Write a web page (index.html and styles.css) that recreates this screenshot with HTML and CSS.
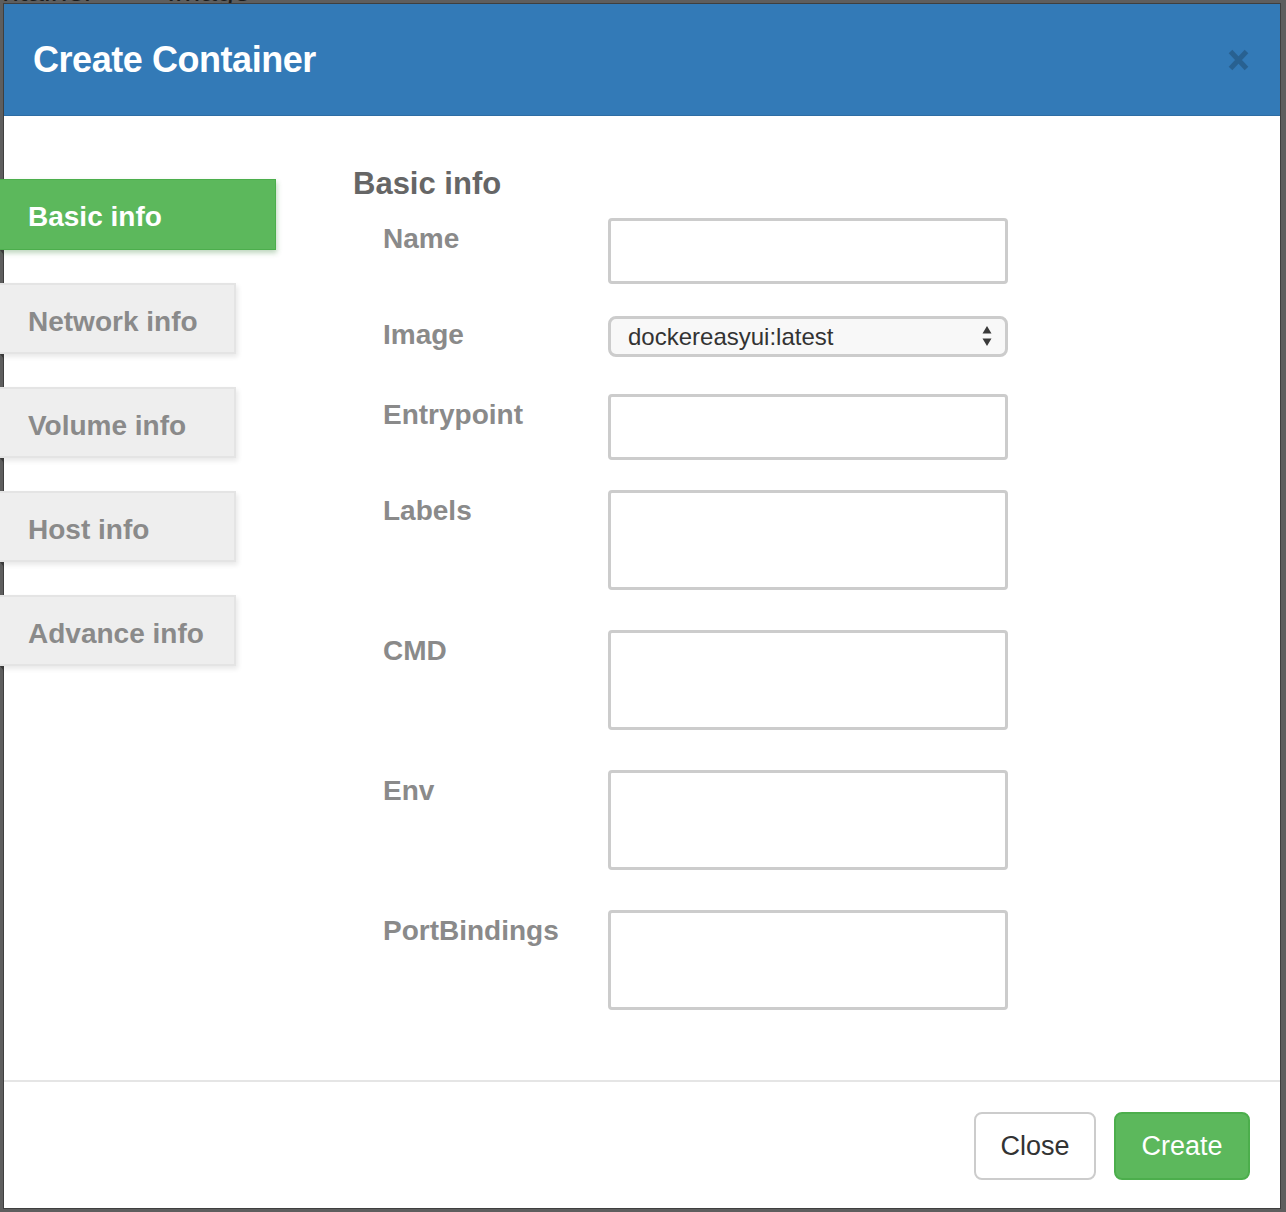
FILE: index.html
```html
<!DOCTYPE html>
<html>
<head>
<meta charset="utf-8">
<title>Create Container</title>
<link rel="stylesheet" href="styles.css">
</head>
<body>
<div class="behind">
  <span class="behind-a">Container</span>
  <span class="behind-b">Image</span>
</div>
<div class="modal">
  <div class="modal-header">
    <h4 class="modal-title">Create Container</h4>
    <button class="close" type="button" aria-label="Close">
      <svg width="21" height="22" viewBox="0 0 21 22"><path d="M2.5 2.5 L18.5 19.5 M18.5 2.5 L2.5 19.5" stroke="#000" stroke-width="5" stroke-linecap="butt"/></svg>
    </button>
  </div>
  <div class="modal-body">
    <ul class="tabs">
      <li class="tab active">Basic info</li>
      <li class="tab">Network info</li>
      <li class="tab">Volume info</li>
      <li class="tab">Host info</li>
      <li class="tab">Advance info</li>
    </ul>
    <div class="pane">
      <h3 class="pane-title">Basic info</h3>
      <div class="row r-name">
        <label class="lbl">Name</label>
        <input class="ctl" type="text">
      </div>
      <div class="row r-image">
        <label class="lbl">Image</label>
        <div class="select-wrap">
          <select class="sel"><option>dockereasyui:latest</option></select>
          <svg class="arrows" width="10" height="22" viewBox="0 0 10 22"><path d="M5 1 L9.5 8.5 L0.5 8.5 Z M5 21 L9.5 13.5 L0.5 13.5 Z" fill="#3a3a3a"/></svg>
        </div>
      </div>
      <div class="row r-entry">
        <label class="lbl">Entrypoint</label>
        <input class="ctl" type="text">
      </div>
      <div class="row r-area">
        <label class="lbl">Labels</label>
        <textarea class="ctl area"></textarea>
      </div>
      <div class="row r-area">
        <label class="lbl">CMD</label>
        <textarea class="ctl area"></textarea>
      </div>
      <div class="row r-area">
        <label class="lbl">Env</label>
        <textarea class="ctl area"></textarea>
      </div>
      <div class="row r-last">
        <label class="lbl">PortBindings</label>
        <textarea class="ctl area"></textarea>
      </div>
    </div>
  </div>
  <div class="modal-footer">
    <button class="btn btn-default" type="button">Close</button>
    <button class="btn btn-success" type="button">Create</button>
  </div>
</div>
</body>
</html>
```

FILE: styles.css
```css
* { box-sizing: border-box; }

html, body {
  margin: 0;
  padding: 0;
}

body {
  width: 1286px;
  height: 1212px;
  overflow: hidden;
  background: #5e5e5e;
  font-family: "Liberation Sans", Arial, sans-serif;
  position: relative;
}

.behind {
  position: absolute;
  left: 0;
  top: -24px;
  font-size: 30px;
  line-height: 30px;
  color: #1c1c1c;
  white-space: nowrap;
}
.behind-a { position: absolute; left: -36px; top: 0; }
.behind-b { position: absolute; left: 167px; top: 0; }

.modal {
  position: relative;
  margin: 3px 0 0 3px;
  width: 1278px;
  height: 1206px;
  border: 1px solid #3f3f3f;
  background: #fff;
  display: flex;
  flex-direction: column;
}

.modal-header {
  height: 112px;
  flex: none;
  background: #337ab7;
  border-bottom: 1px solid #2e6da4;
  display: flex;
  align-items: center;
  justify-content: space-between;
  padding: 0 31px 0 29px;
}

.modal-title {
  margin: 0;
  color: #fff;
  font-size: 36px;
  font-weight: bold;
  letter-spacing: -0.45px;
  line-height: 40px;
}

.close {
  border: 0;
  background: none;
  padding: 0;
  margin: 0;
  width: 21px;
  height: 22px;
  opacity: 0.2;
  display: block;
  cursor: pointer;
}
.close svg { display: block; }

.modal-body {
  flex: 1;
  display: flex;
  align-items: flex-start;
}

.tabs {
  list-style: none;
  margin: 63px 0 0 -4px;
  padding: 0;
  width: 276px;
  flex: none;
}

.tab {
  position: relative;
  width: 236px;
  height: 71px;
  margin-bottom: 33px;
  background: #eeeeee;
  border: 2px solid #e4e4e4;
  border-left: 0;
  box-shadow: 2px 3px 5px rgba(0, 0, 0, 0.09);
  color: #8a8a8a;
  font-size: 28px;
  font-weight: bold;
  line-height: 67px;
  padding: 3px 0 0 28px;
  white-space: nowrap;
}

.tab::after {
  content: "";
  position: absolute;
  left: 0;
  top: 100%;
  margin-top: 2px;
  border-top: 5px solid #3a3a3a;
  border-left: 4px solid transparent;
}

.tab.active {
  width: 276px;
  background: #5cb85c;
  border: 1px solid #4cae4c;
  border-left: 0;
  color: #fff;
  line-height: 69px;
  padding-top: 2px;
  box-shadow: 1px 3px 5px rgba(40, 120, 40, 0.3);
}
.tab.active::after { margin-top: 1px; }

.pane {
  margin-left: 77px;
  padding-top: 50px;
  width: 660px;
}

.pane-title {
  margin: 0 0 16px 0;
  font-size: 31px;
  line-height: 36px;
  font-weight: bold;
  color: #666;
}

.row {
  display: flex;
  align-items: flex-start;
  margin-bottom: 32px;
}
.r-image { margin-bottom: 37px; }
.r-entry { margin-bottom: 30px; }
.r-area { margin-bottom: 40px; }
.r-last { margin-bottom: 0; }

.lbl {
  width: 255px;
  flex: none;
  padding: 1px 0 0 30px;
  font-size: 28px;
  font-weight: bold;
  line-height: 40px;
  color: #8a8a8a;
}
.r-image .lbl { margin-top: -2px; }

.ctl {
  display: block;
  width: 400px;
  height: 66px;
  margin: 0;
  border: 3px solid #cccccc;
  border-radius: 4px;
  background: #fff;
  font-family: "Liberation Sans", Arial, sans-serif;
  font-size: 24px;
  resize: none;
  outline: none;
}
.area { height: 100px; }

.select-wrap {
  position: relative;
  width: 400px;
  height: 41px;
}

.sel {
  -webkit-appearance: none;
  appearance: none;
  display: block;
  width: 400px;
  height: 41px;
  margin: 0;
  border: 3px solid #cccccc;
  border-radius: 8px;
  background: #f8f8f8;
  color: #333;
  font-family: "Liberation Sans", Arial, sans-serif;
  font-size: 24px;
  padding: 0 0 0 17px;
  outline: none;
}

.arrows {
  position: absolute;
  right: 16px;
  top: 9px;
  pointer-events: none;
}

.modal-footer {
  flex: none;
  height: 128px;
  border-top: 2px solid #e5e5e5;
  display: flex;
  justify-content: flex-end;
  align-items: flex-start;
  gap: 18px;
  padding: 30px 30px 0 0;
}

.btn {
  height: 68px;
  margin: 0;
  border-radius: 8px;
  font-family: "Liberation Sans", Arial, sans-serif;
  font-size: 27px;
  line-height: 1;
  cursor: pointer;
}

.btn-default {
  width: 122px;
  background: #fff;
  border: 2px solid #cccccc;
  color: #333;
}

.btn-success {
  width: 136px;
  background: #5cb85c;
  border: 2px solid #4cae4c;
  color: #fff;
}
```
